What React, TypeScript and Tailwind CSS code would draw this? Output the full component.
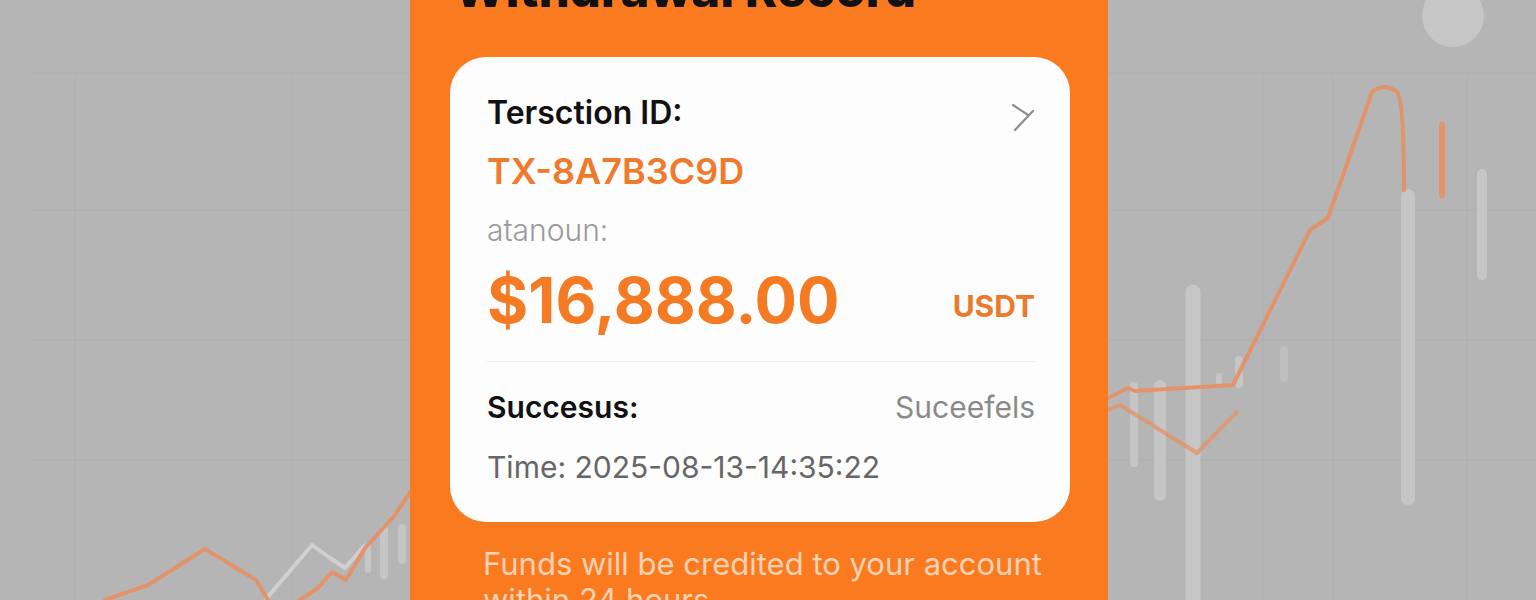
import React from "react";

const font = { fontFamily: "Inter, 'Noto Sans', sans-serif" };

function BackgroundChart() {
  return (
    <svg className="absolute inset-0" width="1536" height="600" viewBox="0 0 1536 600">
      {/* faint grid */}
      <g stroke="#a9a9a9" strokeWidth="1" opacity="0.45">
        <line x1="30" y1="73" x2="1536" y2="73" />
        <line x1="30" y1="210" x2="1536" y2="210" />
        <line x1="30" y1="340" x2="1536" y2="340" />
        <line x1="30" y1="460" x2="1536" y2="460" />
        <line x1="75" y1="75" x2="75" y2="600" />
        <line x1="292" y1="75" x2="292" y2="600" />
        <line x1="1263" y1="75" x2="1263" y2="600" />
        <line x1="1333" y1="75" x2="1333" y2="600" />
        <line x1="1467" y1="75" x2="1467" y2="600" />
      </g>
      <circle cx="1453" cy="16" r="31" fill="#c6c6c6" />
      {/* light bars */}
      <g stroke="#c6c6c6" strokeLinecap="round">
        <line x1="1134" y1="386" x2="1134" y2="463" strokeWidth="8" />
        <line x1="1160" y1="386" x2="1160" y2="495" strokeWidth="12" />
        <line x1="1193" y1="292" x2="1193" y2="600" strokeWidth="15" />
        <line x1="1219" y1="376" x2="1219" y2="382" strokeWidth="6" />
        <line x1="1239" y1="360" x2="1239" y2="384" strokeWidth="8" />
        <line x1="1284" y1="350" x2="1284" y2="378" strokeWidth="8" opacity="0.6" />
        <line x1="1408" y1="196" x2="1408" y2="498" strokeWidth="14" />
        <line x1="1482" y1="174" x2="1482" y2="275" strokeWidth="10" />
        <line x1="368" y1="545" x2="368" y2="570" strokeWidth="6" />
        <line x1="384" y1="530" x2="384" y2="575" strokeWidth="8" />
        <line x1="402" y1="528" x2="402" y2="560" strokeWidth="8" />
      </g>
      <polyline
        points="265,600 312,545 330,558 345,568 365,545"
        fill="none"
        stroke="#d0d0d0"
        strokeWidth="4"
        strokeLinejoin="round"
      />
      <g fill="none" stroke="#e2936a" strokeWidth="4" strokeLinejoin="round" strokeLinecap="round">
        <polyline points="105,600 148,585 205,549 256,580 268,600" />
        <polyline points="300,600 318,588 332,572 346,580 365,548 395,515 410,492" />
        <path d="M1108,398 L1128,388 L1135,391 L1233,385 L1310,230 L1328,218 L1372,92 Q1384,82 1397,92 Q1404,100 1404,190" />
        <polyline points="1108,410 1120,405 1197,453 1237,412" opacity="0.8" />
        <line x1="1442" y1="125" x2="1442" y2="195" strokeWidth="6" />
      </g>
    </svg>
  );
}

export default function App() {
  return (
    <div className="relative w-[1536px] h-[600px] overflow-hidden bg-[#b5b5b5]" style={font}>
      <BackgroundChart />
      <div className="relative ml-[410px] w-[698px] h-[600px] overflow-hidden bg-[#fa7a20]">
        <h1 className="-mt-[35px] ml-[44px] text-[49px] leading-none font-extrabold text-[#111] whitespace-nowrap">
          Withdrawal Record
        </h1>

        <div className="mt-[43px] ml-[40px] w-[620px] rounded-[36px] bg-[#fdfdfd] pl-[37px] pr-[35px] pt-[40px] pb-[40px]">
          <div className="flex items-start justify-between">
            <span className="text-[32px] leading-none font-semibold text-[#111]">Tersction ID:</span>
            <svg width="24" height="30" viewBox="0 0 24 30" className="mt-[6px]">
              <g stroke="#8e8e8e" strokeWidth="2.2" strokeLinecap="round">
                <line x1="2" y1="2" x2="17" y2="12" />
                <line x1="22" y1="8" x2="4" y2="27" />
              </g>
            </svg>
          </div>
          <div className="mt-[20px] text-[36px] leading-none font-semibold text-[#ef7a2c]">TX-8A7B3C9D</div>
          <div className="mt-[26px] text-[30px] leading-none font-light text-[#9a9a9a]">atanoun:</div>
          <div className="mt-[24px] flex items-end justify-between">
            <span className="text-[63px] leading-none font-bold text-[#f47a24]">$16,888.00</span>
            <span className="mb-[11px] text-[30px] leading-none font-bold text-[#ec7a2c]">USDT</span>
          </div>
          <div className="mt-[29px] border-t border-[#ececec]" />
          <div className="mt-[30px] flex items-baseline justify-between">
            <span className="text-[30px] leading-none font-semibold text-[#111]">Succesus:</span>
            <span className="text-[30px] leading-none font-normal text-[#8a8a8a]">Suceefels</span>
          </div>
          <div className="mt-[30px] text-[30px] leading-none font-normal text-[#666]">Time: 2025-08-13-14:35:22</div>
        </div>

        <p className="mt-[24px] ml-[73px] w-[575px] text-[31px] leading-[36px] font-normal text-[#fcd2b4]">
          Funds will be credited to your account within 24 hours
        </p>
      </div>
    </div>
  );
}
